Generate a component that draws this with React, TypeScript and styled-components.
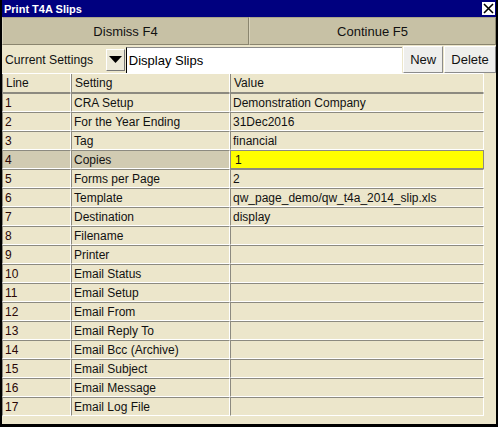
import styled, { createGlobalStyle } from 'styled-components'

const rows: [string, string, string][] = [
  ['1', 'CRA Setup', 'Demonstration Company'],
  ['2', 'For the Year Ending', '31Dec2016'],
  ['3', 'Tag', 'financial'],
  ['4', 'Copies', '1'],
  ['5', 'Forms per Page', '2'],
  ['6', 'Template', 'qw_page_demo/qw_t4a_2014_slip.xls'],
  ['7', 'Destination', 'display'],
  ['8', 'Filename', ''],
  ['9', 'Printer', ''],
  ['10', 'Email Status', ''],
  ['11', 'Email Setup', ''],
  ['12', 'Email From', ''],
  ['13', 'Email Reply To', ''],
  ['14', 'Email Bcc (Archive)', ''],
  ['15', 'Email Subject', ''],
  ['16', 'Email Message', ''],
  ['17', 'Email Log File', ''],
]

const SELECTED = 3

export default function App() {
  return (
    <>
      <GlobalStyle />
      <Window>
        <TitleBar>
          <Title>Print T4A Slips</Title>
          <CloseBox aria-label='close'>
            <svg width='11' height='11' viewBox='0 0 11 11'>
              <path d='M1 1 L10 10 M10 1 L1 10' stroke='#000' strokeWidth='1.6' />
            </svg>
          </CloseBox>
        </TitleBar>
        <ActionBar>
          <ActionButton>Dismiss F4</ActionButton>
          <ActionButton>Continue F5</ActionButton>
        </ActionBar>
        <SettingsBar>
          <SettingsLabel>Current Settings</SettingsLabel>
          <DropButton>
            <svg width='13' height='7' viewBox='0 0 13 7'>
              <path d='M0 0 H13 L6.5 7 Z' fill='#000' />
            </svg>
          </DropButton>
          <NameInput>Display Slips</NameInput>
          <SmallButton $w={40}>New</SmallButton>
          <SmallButton $w={52}>Delete</SmallButton>
        </SettingsBar>
        <Body>
          <Grid>
            <HeadCell>Line</HeadCell>
            <HeadCell>Setting</HeadCell>
            <HeadCell>Value</HeadCell>
            {rows.map(([n, s, v], i) => (
              <Row key={n}>
                <Cell $sel={i === SELECTED} $num>{n}</Cell>
                <Cell $sel={i === SELECTED}>{s}</Cell>
                <ValueCell $edit={i === SELECTED}>{v}</ValueCell>
              </Row>
            ))}
          </Grid>
        </Body>
      </Window>
    </>
  )
}

const GlobalStyle = createGlobalStyle`
  body {
    margin: 0;
    background: #000;
    font-family: "Liberation Sans", Arial, sans-serif;
  }
`

const Window = styled.div`
  width: 498px;
  height: 427px;
  box-sizing: border-box;
  border: 2px solid #000;
  border-top: 0;
  border-bottom-width: 3px;
  background: #ece6cb;
  display: flex;
  flex-direction: column;
`

const TitleBar = styled.div`
  height: 17px;
  background: #00007f;
  display: flex;
  align-items: center;
  justify-content: space-between;
  padding: 0 0 0 2px;
`

const Title = styled.div`
  color: #fff;
  font-weight: bold;
  font-size: 11px;
`

const CloseBox = styled.div`
  width: 13px;
  height: 13px;
  background: #fff;
  display: flex;
  align-items: center;
  justify-content: center;
  margin-right: 1px;
`

const ActionBar = styled.div`
  display: flex;
  height: 28px;
`

const ActionButton = styled.div`
  flex: 1;
  box-sizing: border-box;
  background: #c7c1a5;
  border: 1px solid #8a856e;
  border-top-color: #a9a48c;
  border-left-color: #d8d3bc;
  display: flex;
  align-items: center;
  justify-content: center;
  font-size: 13px;
  color: #111;
`

const SettingsBar = styled.div`
  display: flex;
  align-items: center;
  height: 28px;
  padding-top: 1px;
  box-sizing: border-box;
`

const SettingsLabel = styled.div`
  width: 104px;
  padding-left: 3px;
  box-sizing: border-box;
  font-size: 12.2px;
  color: #111;
`

const DropButton = styled.div`
  width: 19px;
  height: 22px;
  box-sizing: border-box;
  background: #ece9d8;
  border: 1px solid #fff;
  border-right-color: #777;
  border-bottom-color: #777;
  display: flex;
  align-items: center;
  justify-content: center;
  margin-right: 1px;
`

const NameInput = styled.div`
  width: 277px;
  height: 26px;
  box-sizing: border-box;
  background: #fff;
  border-left: 1px solid #000;
  border-top: 1px solid #8a8a8a;
  padding-left: 2px;
  display: flex;
  align-items: center;
  font-size: 13px;
  color: #000;
`

const SmallButton = styled.div<{ $w: number }>`
  width: ${p => p.$w}px;
  height: 27px;
  box-sizing: border-box;
  margin-left: 1px;
  background: #eeeeec;
  border: 1px solid #fff;
  border-right-color: #8c8c8c;
  border-bottom-color: #8c8c8c;
  display: flex;
  align-items: center;
  justify-content: center;
  font-size: 13px;
  color: #111;
`

const Body = styled.div`
  flex: 1;
  padding: 0 12px 0 0;
`

const Grid = styled.div`
  display: grid;
  grid-template-columns: 69px 159px 254px;
  grid-auto-rows: 19px;
  border-top: 1px solid #fff;
`

const Row = styled.div`
  display: contents;
`

const HeadCell = styled.div`
  box-sizing: border-box;
  border-left: 1px solid #8c8a80;
  border-right: 1px solid #fff;
  border-bottom: 1px solid #8c8a80;
  padding-left: 3px;
  display: flex;
  align-items: center;
  font-size: 12px;
  color: #111;
`

const Cell = styled.div<{ $sel?: boolean; $num?: boolean }>`
  box-sizing: border-box;
  border-top: 1px solid #8c8a80;
  border-left: 1px solid #8c8a80;
  border-right: 1px solid #fff;
  border-bottom: 1px solid #fff;
  background: ${p => (p.$sel ? '#d1cbb2' : 'transparent')};
  padding-left: 2px;
  display: flex;
  align-items: center;
  font-size: 12px;
  color: ${p => (p.$num ? '#2a0606' : '#111')};
  white-space: nowrap;
`

const ValueCell = styled(Cell)<{ $edit?: boolean }>`
  background: ${p => (p.$edit ? '#ffff00' : 'transparent')};
  border-color: ${p => (p.$edit ? '#8c8a80' : '')};
  padding-left: ${p => (p.$edit ? '4px' : '2px')};
`
